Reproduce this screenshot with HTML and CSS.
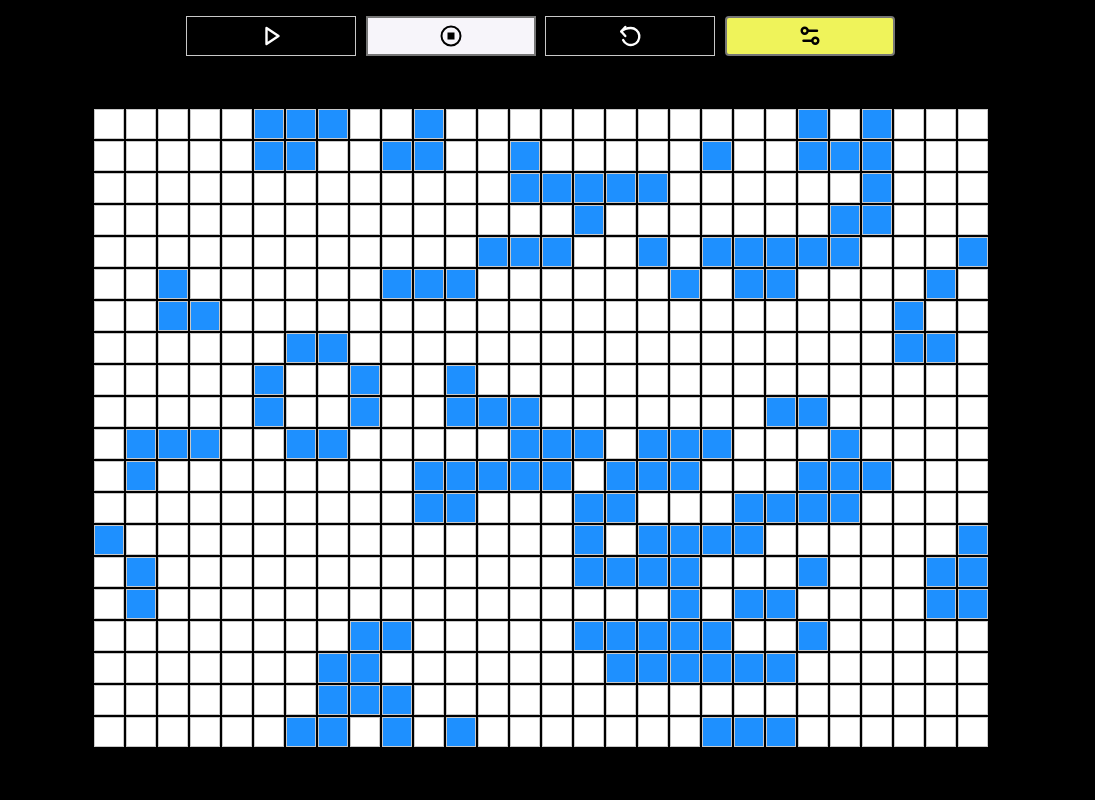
FILE: index.html
```html
<!DOCTYPE html>
<html lang="en">
<head>
    <meta charset="UTF-8">
    <meta name="viewport" content="width=device-width, initial-scale=1.0">
    <title>Game of Life</title>
    <link rel="stylesheet" href="styles.css">
</head>
<body>
    <div class="toolbar">
        <button class="btn" aria-label="Play">
            <svg width="24" height="24" viewBox="0 0 24 24" fill="none" stroke="currentColor" stroke-width="2.4" stroke-linecap="round" stroke-linejoin="round"><polygon points="7.5 4 19.5 12 7.5 20"/></svg>
        </button>
        <button class="btn btn-stop" aria-label="Stop">
            <svg width="24" height="24" viewBox="0 0 24 24" fill="none" stroke="currentColor" stroke-width="2"><circle cx="12" cy="12" r="9.5"/><rect x="8.5" y="8.5" width="7" height="7" fill="currentColor" stroke="none"/></svg>
        </button>
        <button class="btn" aria-label="Reset">
            <svg width="24" height="24" viewBox="0 0 24 24" fill="none" stroke="currentColor" stroke-width="2.4" stroke-linecap="round" stroke-linejoin="round"><path d="M7.3 3 3.3 7.5 7.3 12"/><path d="M3.3 7.5C5.3 5.5 8.8 4 12.8 4A8.5 8.5 0 1 1 5.1 16"/></svg>
        </button>
        <button class="btn btn-settings" aria-label="Settings">
            <svg width="24" height="24" viewBox="0 0 24 24" fill="none" stroke="currentColor" stroke-width="2.4" stroke-linecap="round"><circle cx="6.7" cy="6.7" r="3"/><path d="M10 6.7h9"/><circle cx="17.3" cy="16.7" r="3"/><path d="M14 16.7H5.5"/></svg>
        </button>
    </div>
    <div class="grid" id="grid"></div>
    <script src="script.js"></script>
</body>
</html>
```

FILE: styles.css
```css
body {
    margin: 0;
    height: 800px;
    background-color: black;
    font-family: "Liberation Sans", sans-serif;
    overflow: hidden;
}
.toolbar {
    display: flex;
    justify-content: center;
    gap: 9.6px;
    padding: 16px 14px 0 0;
}
.btn {
    display: flex;
    align-items: center;
    justify-content: center;
    box-sizing: border-box;
    width: 170px;
    height: 40px;
    padding: 0;
    background-color: black;
    color: white;
    border: 1px solid #c8c8c8;
    cursor: pointer;
}
.btn-stop {
    background-color: #f7f5fa;
    color: black;
    border: 2px solid #767676;
}
.btn-settings {
    background-color: #eff35a;
    color: black;
    border: 2px solid #767676;
    border-radius: 4px;
}
.grid {
    display: grid;
    grid-template-columns: repeat(28, 30px);
    grid-auto-rows: 30px;
    gap: 2px;
    margin: 53px 0 0 94px;
}
.cell {
    box-sizing: border-box;
    background-color: white;
    border: 1px solid #c8c8c8;
}
.cell.on {
    background-color: #1e90ff;
}
```

FILE: script.js
```js
// live cells, one list of columns per row
const liveCells = [
    [5, 6, 7, 10, 22, 24],
    [5, 6, 9, 10, 13, 19, 22, 23, 24],
    [13, 14, 15, 16, 17, 24],
    [15, 23, 24],
    [12, 13, 14, 17, 19, 20, 21, 22, 23, 27],
    [2, 9, 10, 11, 18, 20, 21, 26],
    [2, 3, 25],
    [6, 7, 25, 26],
    [5, 8, 11],
    [5, 8, 11, 12, 13, 21, 22],
    [1, 2, 3, 6, 7, 13, 14, 15, 17, 18, 19, 23],
    [1, 10, 11, 12, 13, 14, 16, 17, 18, 22, 23, 24],
    [10, 11, 15, 16, 20, 21, 22, 23],
    [0, 15, 17, 18, 19, 20, 27],
    [1, 15, 16, 17, 18, 22, 26, 27],
    [1, 18, 20, 21, 26, 27],
    [8, 9, 15, 16, 17, 18, 19, 22],
    [7, 8, 16, 17, 18, 19, 20, 21],
    [7, 8, 9],
    [6, 7, 9, 11, 19, 20, 21]
];

const grid = document.getElementById('grid');
for (let row = 0; row < liveCells.length; row++) {
    for (let col = 0; col < 28; col++) {
        let cell = document.createElement('div');
        cell.className = liveCells[row].includes(col) ? 'cell on' : 'cell';
        grid.appendChild(cell);
    }
}
```
